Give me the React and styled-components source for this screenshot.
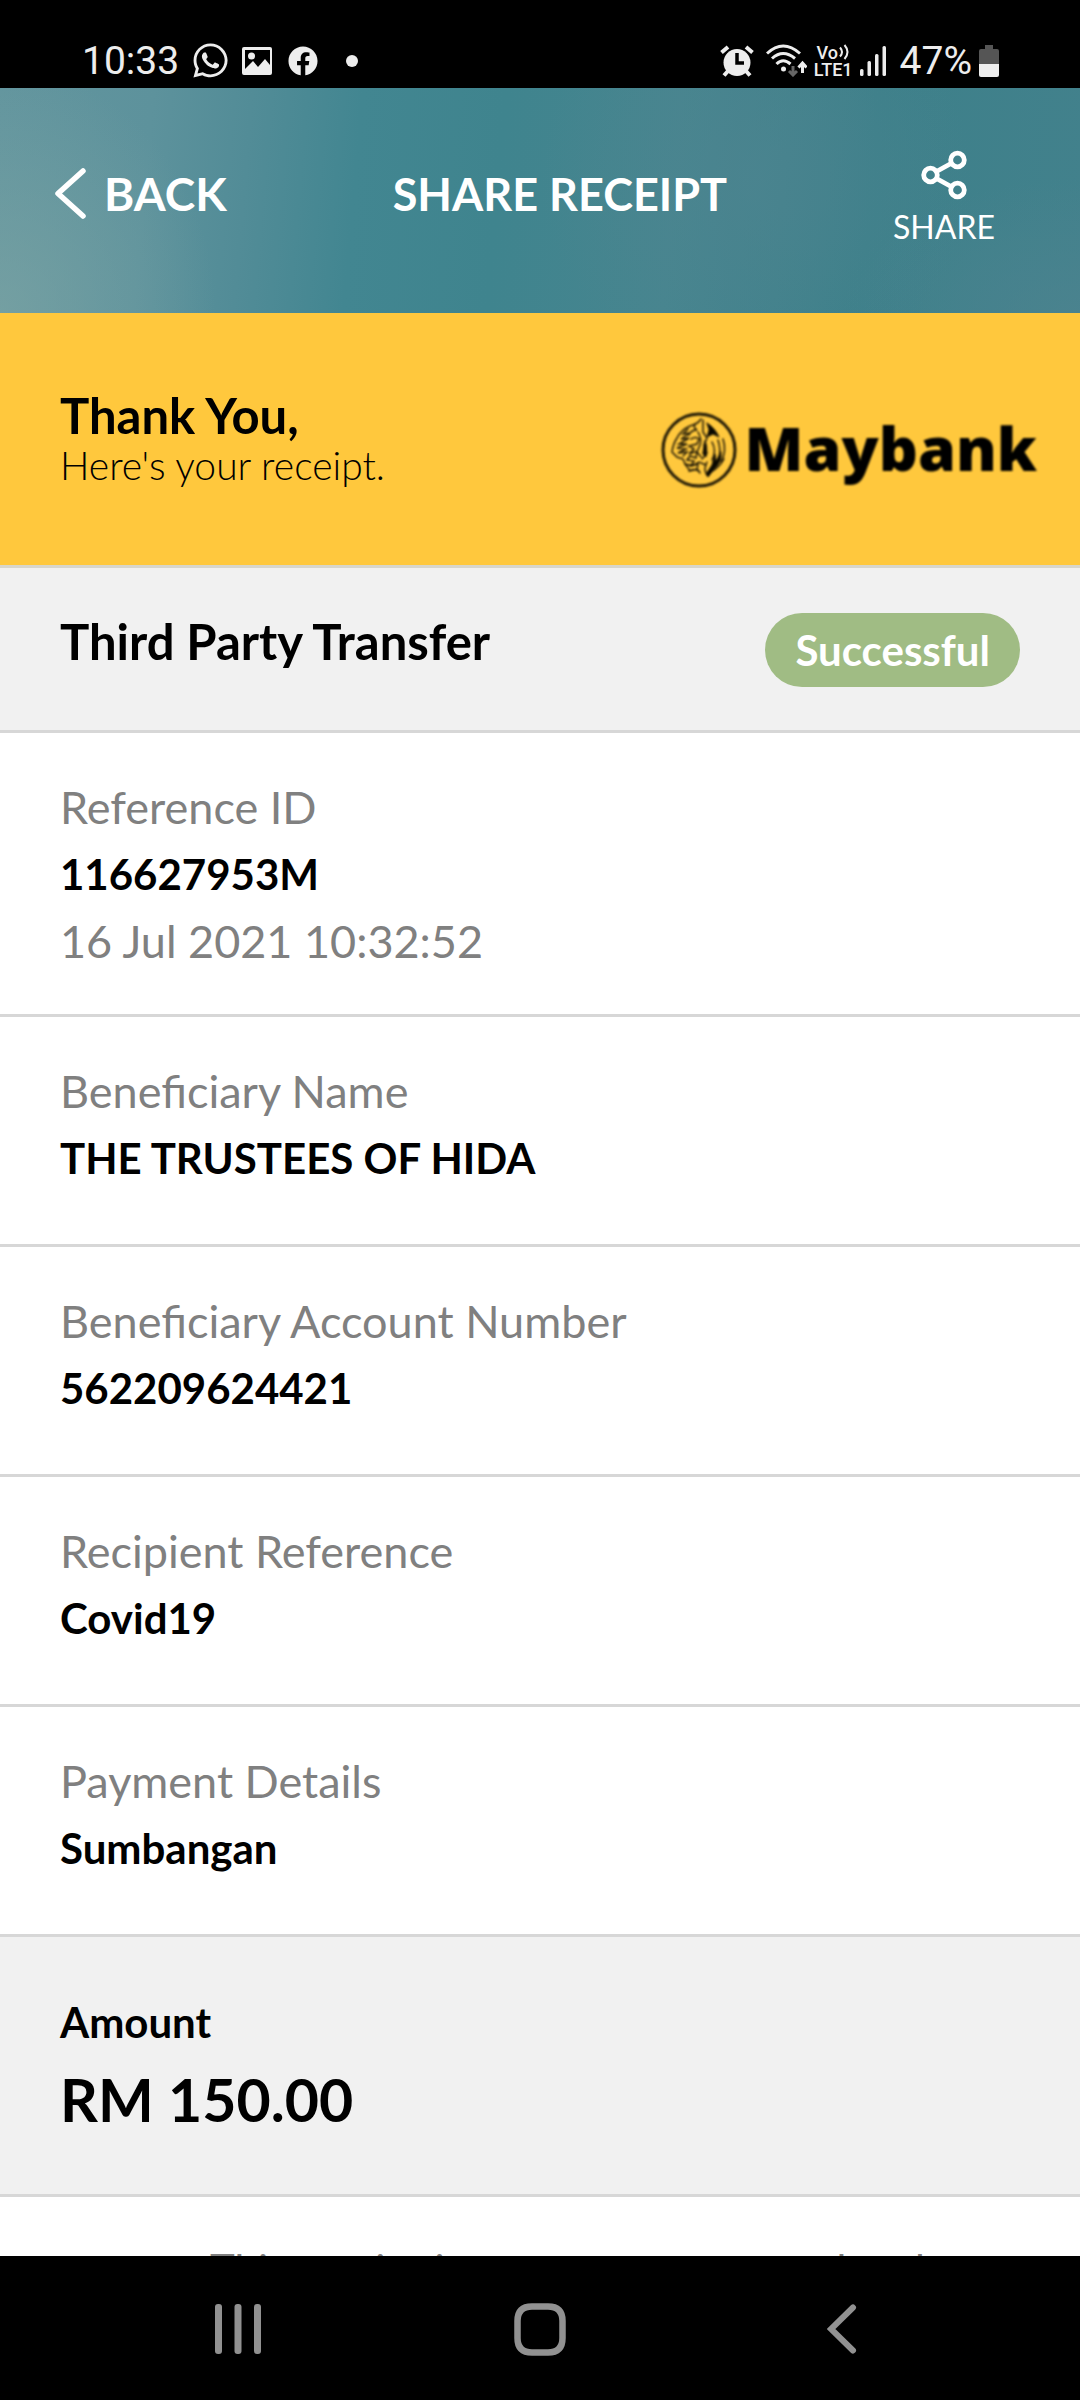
import React from "react";
import styled, { createGlobalStyle } from "styled-components";
import { FaFacebook, FaWhatsapp } from "react-icons/fa";

const GlobalStyle = createGlobalStyle`
  * { box-sizing: border-box; }
  body { margin: 0; background: #fff; }
  button { border: 0; padding: 0; background: none; color: inherit; font: inherit; cursor: pointer; }
  svg { display: block; flex: none; }
  h1, h2, p, dl, dt, dd { margin: 0; }
`;

const Screen = styled.div`
  display: flex;
  flex-direction: column;
  height: 100vh;
  overflow: hidden;
  font-family: Lato, "Noto Sans", sans-serif;
  color: #000;
`;

const StatusBar = styled.div`
  flex: none;
  display: flex;
  justify-content: space-between;
  height: 88px;
  padding: 33px 81px 0 82px;
  background: #000;
  color: #ededed;
  font-family: Roboto, sans-serif;
  font-size: 39px;
  line-height: 56px;
`;

const StatusGroup = styled.div`
  display: flex;
  align-items: center;
  gap: ${(p) => p.$gap}px;
  padding-left: ${(p) => p.$indent || 0}px;
`;

const Network = styled.span`
  display: flex;
  flex-direction: column;
  font-size: 18px;
  font-weight: 500;
  line-height: 17px;
`;

const VoLine = styled.span`
  display: flex;
  align-items: center;
  justify-content: center;
  gap: 1px;
`;

const Header = styled.header`
  flex: none;
  display: flex;
  justify-content: space-between;
  align-items: center;
  height: 225px;
  padding: 0 85px 14px 55px;
  color: #fff;
  background:
    radial-gradient(ellipse 20% 110% at 0% 100%, rgba(124, 164, 164, 0.7), rgba(124, 164, 164, 0)),
    radial-gradient(ellipse 20% 90% at 70% 40%, rgba(78, 132, 144, 0.6), rgba(78, 132, 144, 0)),
    radial-gradient(ellipse 22% 60% at 100% 100%, rgba(76, 131, 143, 0.8), rgba(76, 131, 143, 0)),
    linear-gradient(95deg, #62959e 0%, #5d929c 14%, #528c97 23%, #428691 33%, #3f848e 46%, #47858f 62%, #42828c 72%, #3d808a 80%, #42818c 100%);
`;

const BackButton = styled.button`
  display: flex;
  align-items: center;
  gap: 18px;
  font-size: 46px;
  font-weight: 700;
  line-height: 56px;
`;

const Title = styled.h1`
  font-size: 45px;
  font-weight: 700;
  line-height: 56px;
`;

const ShareButton = styled.button`
  display: flex;
  flex-direction: column;
  align-items: center;
  gap: 8px;
  padding-top: 9px;
  font-size: 32px;
  line-height: 38px;
`;

const Content = styled.main`
  flex: 1;
  min-height: 0;
  overflow: hidden;
  background: #fff;
`;

const Banner = styled.section`
  display: flex;
  justify-content: space-between;
  align-items: flex-start;
  padding: 74px 43px 77px 60px;
  border-bottom: 3px solid #d8d6cc;
  background: #ffc83d;
`;

const Heading = styled.h2`
  font-size: 49px;
  font-weight: 700;
  line-height: 56px;
`;

const Subheading = styled.p`
  font-size: 39px;
  font-weight: 300;
  line-height: 45px;
`;

const Brand = styled.div`
  display: flex;
  align-items: flex-start;
  gap: 8px;
  padding-top: 25px;
  filter: blur(1px);
`;

const BrandName = styled.span`
  font-family: "Open Sans", "Noto Sans", sans-serif;
  font-size: 61px;
  font-weight: 800;
  line-height: 71px;
`;

const Summary = styled.section`
  display: flex;
  justify-content: space-between;
  align-items: flex-start;
  padding: 45px 60px 43px;
  border-bottom: 3px solid #d7d7d7;
  background: #f1f1f1;
`;

const Badge = styled.span`
  padding: 0 30px;
  border-radius: 37px;
  background: #a0bc84;
  color: #fff;
  font-size: 42px;
  font-weight: 700;
  line-height: 74px;
`;

const Detail = styled.div`
  min-height: 230px;
  padding: 41px 60px 39px;
  border-bottom: 3px solid #d7d7d7;
`;

const Label = styled.dt`
  color: #808080;
  font-size: 45px;
  line-height: 67px;
`;

const Value = styled.dd`
  font-size: 42px;
  font-weight: 700;
  line-height: 67px;
`;

const Stamp = styled.dd`
  color: #808080;
  font-size: 45px;
  line-height: 67px;
`;

const Amount = styled.section`
  padding: 52px 60px 51px;
  border-bottom: 3px solid #d7d7d7;
  background: #f1f1f1;
`;

const AmountLabel = styled.h2`
  font-size: 42px;
  font-weight: 700;
  line-height: 67px;
`;

const AmountValue = styled.p`
  font-size: 59px;
  font-weight: 700;
  line-height: 87px;
`;

const Note = styled.p`
  padding: 44px 60px 44px 210px;
  color: #808080;
  font-size: 42px;
  line-height: 56px;
`;

const NavBar = styled.nav`
  flex: none;
  display: grid;
  grid-template-columns: repeat(3, 1fr);
  height: 144px;
  padding: 2px 87px 0;
  background: #000;
`;

const NavButton = styled.button`
  display: flex;
  align-items: center;
  justify-content: center;
`;

const details = [
  { label: "Reference ID", value: "116627953M", stamp: "16 Jul 2021 10:32:52" },
  { label: "Beneficiary Name", value: "THE TRUSTEES OF HIDA" },
  { label: "Beneficiary Account Number", value: "562209624421" },
  { label: "Recipient Reference", value: "Covid19" },
  { label: "Payment Details", value: "Sumbangan" },
];

const PictureIcon = () => (
  <svg width="30" height="30" viewBox="0 0 30 30">
    <path fill="#ededed" fillRule="evenodd" d="M2 1h26a2 2 0 0 1 2 2v24a2 2 0 0 1-2 2H2a2 2 0 0 1-2-2V3a2 2 0 0 1 2-2Zm1 3v19l8-8 5 6 7-8 5 6V4Z" />
    <circle cx="9.500" cy="10" r="3.500" fill="#ededed" />
  </svg>
);

const DotIcon = () => (
  <svg width="12" height="12" viewBox="0 0 12 12"><circle cx="6" cy="6" r="6" fill="#ededed" /></svg>
);

const AlarmIcon = () => (
  <svg width="34" height="32" viewBox="0 0 34 32" fill="none" stroke="#ededed">
    <circle cx="17" cy="17.500" r="13.500" fill="#ededed" stroke="none" />
    <path d="M1.500 7.500 8 2M32.500 7.500 26 2" strokeWidth="4" />
    <path d="m8 26-4 4.500M26 26l4 4.500" strokeWidth="4" />
    <path d="M17 8v10h7" stroke="#000" strokeWidth="3.500" />
  </svg>
);

const WifiIcon = () => (
  <svg width="41" height="33" viewBox="0 0 41 33" fill="none" stroke="#ededed" strokeWidth="3">
    <path d="M1 9.500Q17 -5.500 34 9.500" />
    <path d="M6 14.500Q17 4.500 29 14.500" />
    <path d="M10.500 20Q17 13.500 24.500 20" />
    <circle cx="17.500" cy="25" r="2.500" fill="#ededed" stroke="none" />
    <path d="M27 22v9m-4-4 4 4 4-4" stroke="#666" />
    <path d="M36.500 29V19m-4 4.500 4-4.500 4 4.500" />
  </svg>
);

const WavesIcon = () => (
  <svg width="11" height="16" viewBox="0 0 11 16" fill="none" stroke="#ededed" strokeWidth="2">
    <path d="M1 3.500q4 4.500 0 9M5.500 1q6 7 0 14" />
  </svg>
);

const SignalIcon = () => (
  <svg width="27" height="30" viewBox="0 0 27 30" fill="#ededed">
    <rect x="0" y="23" width="3.500" height="7" rx="1.500" />
    <rect x="7.500" y="15" width="3.500" height="15" rx="1.500" />
    <rect x="15" y="8" width="3.500" height="22" rx="1.500" />
    <rect x="22.500" y="0" width="3.500" height="30" rx="1.500" />
  </svg>
);

const BatteryIcon = () => (
  <svg width="20" height="32" viewBox="0 0 20 32">
    <path fill="#555" d="M6 0h8v4h4a2 2 0 0 1 2 2v13H0V6a2 2 0 0 1 2-2h4Z" />
    <path fill="#ededed" d="M0 19h20v11a2 2 0 0 1-2 2H2a2 2 0 0 1-2-2Z" />
  </svg>
);

const BackIcon = () => (
  <svg width="31" height="51" viewBox="0 0 31 51" fill="none" stroke="#fff" strokeWidth="5.500" strokeLinecap="round" strokeLinejoin="round">
    <path d="M28 3 3 25.500 28 48" />
  </svg>
);

const ShareIcon = () => (
  <svg width="46" height="50" viewBox="0 0 46 50" fill="none" stroke="#fff" strokeWidth="4.800">
    <circle cx="9.500" cy="25" r="6.800" />
    <circle cx="36.500" cy="10" r="6.800" />
    <circle cx="36.500" cy="40" r="6.800" />
    <path d="m15.500 21.500 14.500-8M15.500 28.500l14.500 8" />
  </svg>
);

const TigerIcon = () => (
  <svg width="76" height="76" viewBox="0 0 76 76" fill="none" stroke="#1d1706" strokeLinecap="round">
    <circle cx="38" cy="38" r="36" strokeWidth="3" />
    <g strokeWidth="1.500">
      <path d="M40 7q-3 5-11 7-9 4-13 12-4 6-5 14l5 5 6 2 2 5 5 7 7-2 3 4" />
      <path d="M34 12q-2 4 2 6-6 0-8 5M27 17l-5 5 7-1-9 6 8-1-10 6 8 0-10 4 9 1-8 4 9-1-4 4" />
      <path d="M30 27q5-3 8 0l-2 5-8 2 5 3-5 5 8-3-1 7-6-2-3 4 7 1-3 5 7-2-1 6M37 20q4 7 2 13l-3 7 4 5" />
      <path d="M42 8v12l4 6-3 7 3 8-5 6M51 30q5 9 0 18M57 28q3 9 1 18M62 27q4 12-2 23M46 50q-4 7 0 13" />
      <path d="M24 52q8 3 14-2l7 3M28 59q5-3 10 0M50 60q8-4 13-13" />
    </g>
    <g fill="#080700" strokeWidth="1">
      <path d="M46 11q8 5 12 14l-6-3-6 3 2-7Z" />
      <path d="M60 40q1 10-6 16l-7 9-2-3 6-9 3-11 1 7Z" />
      <path d="M44 29q3 6 1 16l-3-3Z" />
    </g>
  </svg>
);

const RecentsIcon = () => (
  <svg width="46" height="50" viewBox="0 0 46 50" fill="#919191">
    <rect x="0" width="7" height="50" rx="3" />
    <rect x="19.500" width="7" height="50" rx="3" />
    <rect x="39" width="7" height="50" rx="3" />
  </svg>
);

const HomeIcon = () => (
  <svg width="52" height="53" viewBox="0 0 52 53" fill="none" stroke="#919191" strokeWidth="6.500">
    <path d="M18 3.500h16q14.500 0 14.500 14.500v17q0 14.500-14.500 14.500H18Q3.500 49.500 3.500 35V18Q3.500 3.500 18 3.500Z" />
  </svg>
);

const NavBackIcon = () => (
  <svg width="30" height="50" viewBox="0 0 30 50" fill="none" stroke="#919191" strokeWidth="6" strokeLinecap="round">
    <path d="M26 3.500 4 25l22 21.500" />
  </svg>
);

export default function App() {
  return (
    <Screen>
      <GlobalStyle />
      <StatusBar>
        <StatusGroup $gap={12}>
          <span>10:33</span>
          <FaWhatsapp size={39} />
          <StatusGroup $gap={16}>
            <PictureIcon />
            <FaFacebook size={30} />
          </StatusGroup>
          <StatusGroup $gap={0} $indent={16}>
            <DotIcon />
          </StatusGroup>
        </StatusGroup>
        <StatusGroup $gap={7}>
          <StatusGroup $gap={12}>
            <AlarmIcon />
            <WifiIcon />
          </StatusGroup>
          <Network>
            <VoLine>Vo<WavesIcon /></VoLine>
            <span>LTE1</span>
          </Network>
          <SignalIcon />
          <StatusGroup $gap={7} $indent={6}>
            <span>47%</span>
            <BatteryIcon />
          </StatusGroup>
        </StatusGroup>
      </StatusBar>

      <Header>
        <BackButton type="button"><BackIcon />BACK</BackButton>
        <Title>SHARE RECEIPT</Title>
        <ShareButton type="button"><ShareIcon />SHARE</ShareButton>
      </Header>

      <Content>
        <Banner>
          <div>
            <Heading>Thank You,</Heading>
            <Subheading>Here's your receipt.</Subheading>
          </div>
          <Brand>
            <TigerIcon />
            <BrandName>Maybank</BrandName>
          </Brand>
        </Banner>

        <Summary>
          <Heading>Third Party Transfer</Heading>
          <Badge>Successful</Badge>
        </Summary>

        <dl>
          {details.map(({ label, value, stamp }) => (
            <Detail key={label}>
              <Label>{label}</Label>
              <Value>{value}</Value>
              {stamp && <Stamp>{stamp}</Stamp>}
            </Detail>
          ))}
        </dl>

        <Amount>
          <AmountLabel>Amount</AmountLabel>
          <AmountValue>RM 150.00</AmountValue>
        </Amount>

        <Note>This receipt is computer generated and no signature is required.</Note>
      </Content>

      <NavBar>
        <NavButton type="button" aria-label="Recent apps"><RecentsIcon /></NavButton>
        <NavButton type="button" aria-label="Home"><HomeIcon /></NavButton>
        <NavButton type="button" aria-label="Back"><NavBackIcon /></NavButton>
      </NavBar>
    </Screen>
  );
}
